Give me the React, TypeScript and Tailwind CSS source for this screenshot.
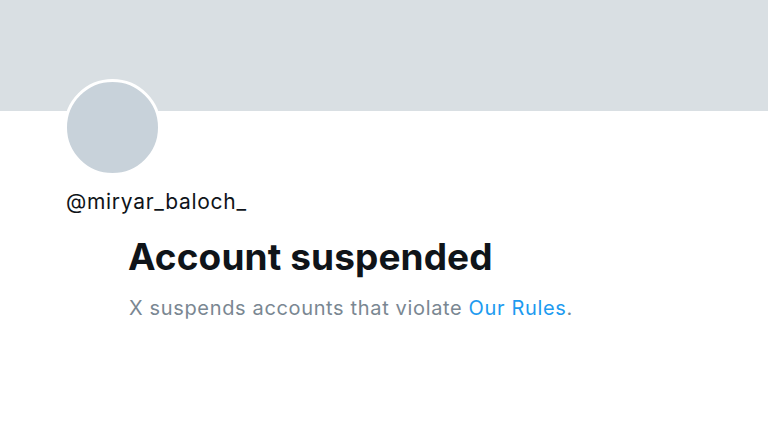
export default function App() {
  return (
    <div className="w-[768px] h-[432px] bg-white overflow-hidden" style={{ fontFamily: 'Inter, "Noto Sans", sans-serif' }}>
      <div className="h-[111px] bg-[#d9dfe3]" />
      <div className="pl-[64px]">
        <div className="-mt-[32px] w-[97px] h-[97px] rounded-full border-[3px] border-white bg-[#c8d2da]" />
        <div className="mt-[13px] pl-[2px] text-[21px] leading-[26px] tracking-[0.7px] text-[#0f1419]">@miryar_baloch_</div>
      </div>
      <div className="pl-[128px] mt-[20px]">
        <h1 className="text-[37px] leading-[44px] font-bold text-[#0f1419] tracking-[0.1px]">Account suspended</h1>
        <p className="mt-[17px] pl-[1px] text-[20px] leading-[24px] tracking-[0.65px] text-[#7a8792]">
          X suspends accounts that violate <span className="text-[#1d9bf0]">Our Rules</span>.
        </p>
      </div>
    </div>
  );
}
